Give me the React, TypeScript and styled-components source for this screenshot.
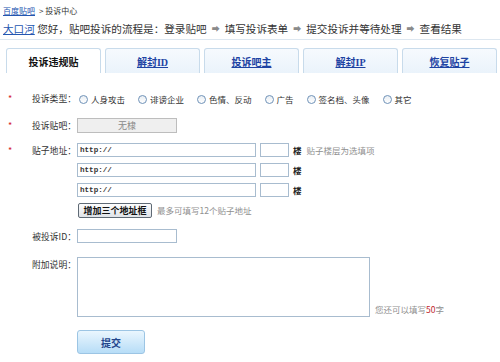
import React from "react";
import styled, { createGlobalStyle } from "styled-components";

const Global = createGlobalStyle`
  html, body { margin: 0; padding: 0; background: #fff; }
  body {
    font-family: "Noto Sans CJK SC", "Liberation Sans", sans-serif;
    font-size: 9px;
    color: #333;
    width: 500px;
    height: 362px;
    overflow: hidden;
  }
  * { box-sizing: border-box; }
`;

const Page = styled.div`
  display: flex;
  flex-direction: column;
  width: 500px;
`;

const Crumb = styled.div`
  display: flex;
  align-items: center;
  gap: 4px;
  padding: 4px 3px 0;
  height: 18px;
  font-size: 8px;
  line-height: 14px;
  color: #333;
`;

const Link = styled.a`
  color: #2456b0;
  text-decoration: underline;
  cursor: pointer;
`;

const Flow = styled.div`
  display: flex;
  align-items: center;
  height: 22px;
  padding: 0 3px;
  font-size: 10.6px;
  line-height: 16px;
  color: #333;
  border-bottom: 1px solid #dde7f0;
  white-space: nowrap;
`;

const Arrow = styled.span`
  color: #8a8a8a;
  font-size: 8px;
  margin: 0 5px;
`;

const Tabs = styled.div`
  display: flex;
  gap: 4px;
  padding-left: 6px;
  margin-top: 8px;
`;

const Tab = styled.div<{ $active?: boolean }>`
  width: 95px;
  height: 25px;
  display: flex;
  align-items: center;
  justify-content: center;
  border: 1px solid #c8dbeb;
  border-bottom: none;
  border-radius: 3px 3px 0 0;
  background: ${(p) =>
    p.$active ? "#fff" : "linear-gradient(to bottom, #f6fafe, #eaf3fb)"};
  font-size: 10px;
  font-weight: bold;
  color: ${(p) => (p.$active ? "#111" : "#1d43a3")};
  text-decoration: ${(p) => (p.$active ? "none" : "underline")};
  font-family: "Liberation Serif", "Noto Sans CJK SC", serif;
`;

const Form = styled.div`
  display: flex;
  flex-direction: column;
  padding-top: 18px;
`;

const Row = styled.div<{ $mt?: number }>`
  display: grid;
  grid-template-columns: 30px 47px 1fr;
  align-items: start;
  margin-top: ${(p) => p.$mt ?? 0}px;
`;

const Star = styled.span`
  color: #d4232b;
  font-size: 9px;
  padding-left: 8px;
  line-height: 15px;
`;

const Label = styled.span`
  text-align: right;
  padding-right: 1px;
  line-height: 15px;
  font-size: 8.8px;
  color: #333;
  white-space: nowrap;
`;

const Options = styled.div`
  display: flex;
  align-items: center;
  gap: 13px;
  padding-left: 2px;
  height: 16px;
`;

const Option = styled.label`
  display: flex;
  align-items: center;
  gap: 3px;
  font-size: 8.5px;
  color: #333;
  white-space: nowrap;
`;

const Radio = styled.span`
  width: 9px;
  height: 9px;
  border-radius: 50%;
  border: 1px solid #6f92b8;
  background: linear-gradient(#e9eef3, #fff);
`;

const Static = styled.div`
  width: 100px;
  height: 15px;
  border: 1px solid #bdbdbd;
  background: #efefef;
  color: #8a8a8a;
  display: flex;
  align-items: center;
  justify-content: center;
  font-size: 9px;
`;

const Stack = styled.div`
  display: flex;
  flex-direction: column;
  gap: 6px;
`;

const Line = styled.div`
  display: flex;
  align-items: center;
  gap: 4px;
  height: 14px;
`;

const Input = styled.div<{ $w: number }>`
  width: ${(p) => p.$w}px;
  height: 14px;
  border: 1px solid #a8bccf;
  background: #fff;
  font-family: "Liberation Mono", monospace;
  font-size: 7.6px;
  font-weight: bold;
  color: #333;
  padding-left: 2px;
  display: flex;
  align-items: center;
`;

const Floor = styled.span`
  font-weight: bold;
  font-size: 8.5px;
  color: #222;
`;

const Hint = styled.span`
  color: #8f8f8f;
  font-size: 8.5px;
  margin-left: 1px;
`;

const AddButton = styled.button`
  width: 74px;
  height: 15px;
  margin-left: 1px;
  padding: 0;
  border: 1px solid #5f6a75;
  border-radius: 2px;
  background: linear-gradient(#fdfdfd, #dfe3e8);
  font-family: "Noto Sans CJK SC", sans-serif;
  font-weight: bold;
  font-size: 9px;
  color: #111;
  line-height: 13px;
`;

const Textarea = styled.div`
  width: 293px;
  height: 60px;
  border: 1px solid #a8bccf;
  background: #fff;
`;

const NoteLine = styled.div`
  display: flex;
  align-items: flex-end;
  gap: 5px;
`;

const Remain = styled.span`
  color: #8f8f8f;
  font-size: 8.5px;
  line-height: 12px;
  margin-bottom: 2px;
`;

const Red = styled.span`
  color: #c0272d;
`;

const Submit = styled.button`
  width: 68px;
  height: 24px;
  border: 1px solid #9cc5e4;
  border-radius: 3px;
  background: linear-gradient(#eaf6fe, #b7ddf7);
  font-family: "Noto Sans CJK SC", sans-serif;
  font-weight: bold;
  font-size: 10px;
  color: #23458c;
  padding: 0;
`;

const tabs = ["投诉违规贴", "解封ID", "投诉吧主", "解封IP", "恢复贴子"];
const types = ["人身攻击", "诽谤企业", "色情、反动", "广告", "签名档、头像", "其它"];

export default function App() {
  return (
    <Page>
      <Global />
      <Crumb>
        <Link>百度贴吧</Link>
        <span>&gt; 投诉中心</span>
      </Crumb>
      <Flow>
        <Link>大口河</Link>
        <span>&nbsp;您好，贴吧投诉的流程是：登录贴吧</span>
        <Arrow>➡</Arrow>
        <span>填写投诉表单</span>
        <Arrow>➡</Arrow>
        <span>提交投诉并等待处理</span>
        <Arrow>➡</Arrow>
        <span>查看结果</span>
      </Flow>
      <Tabs>
        {tabs.map((t, i) => (
          <Tab key={t} $active={i === 0}>
            {t}
          </Tab>
        ))}
      </Tabs>
      <Form>
        <Row>
          <Star>*</Star>
          <Label>投诉类型：</Label>
          <Options>
            {types.map((t) => (
              <Option key={t}>
                <Radio />
                {t}
              </Option>
            ))}
          </Options>
        </Row>
        <Row $mt={11}>
          <Star>*</Star>
          <Label>投诉贴吧：</Label>
          <Static>无棣</Static>
        </Row>
        <Row $mt={10}>
          <Star>*</Star>
          <Label>贴子地址：</Label>
          <Stack>
            {[0, 1, 2].map((i) => (
              <Line key={i}>
                <Input $w={179}>http://</Input>
                <Input $w={29} />
                <Floor>楼</Floor>
                {i === 0 && <Hint>贴子楼层为选填项</Hint>}
              </Line>
            ))}
            <Line>
              <AddButton>增加三个地址框</AddButton>
              <Hint>最多可填写12个贴子地址</Hint>
            </Line>
          </Stack>
        </Row>
        <Row $mt={12}>
          <span />
          <Label>被投诉ID：</Label>
          <Input $w={100} />
        </Row>
        <Row $mt={13}>
          <span />
          <Label>附加说明：</Label>
          <NoteLine>
            <Textarea />
            <Remain>
              您还可以填写<Red>50</Red>字
            </Remain>
          </NoteLine>
        </Row>
        <Row $mt={13}>
          <span />
          <span />
          <Submit>提交</Submit>
        </Row>
      </Form>
    </Page>
  );
}
